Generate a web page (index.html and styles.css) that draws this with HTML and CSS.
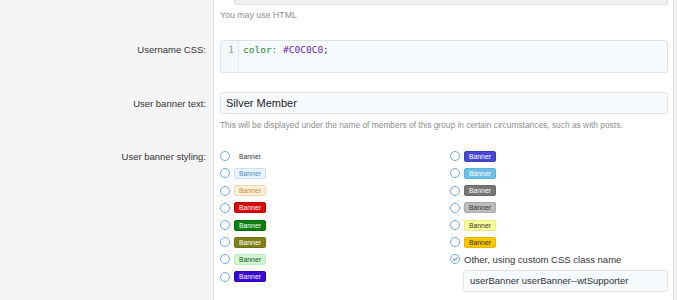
FILE: index.html
```html
<!DOCTYPE html>
<html>
<head>
<meta charset="utf-8">
<link rel="stylesheet" href="styles.css">
</head>
<body>
<div class="form">
  <div class="label"></div>
  <div class="ctrl ctrl--first">
    <div class="stub"></div>
    <div class="hint hint--top">You may use HTML</div>
  </div>

  <div class="label label--css">Username CSS:</div>
  <div class="ctrl ctrl--css">
    <div class="code">
      <div class="gutter">1</div>
      <div class="lines"><span class="prop">color:</span> <span class="val">#C0C0C0</span>;</div>
    </div>
  </div>

  <div class="label label--text">User banner text:</div>
  <div class="ctrl ctrl--text">
    <div class="input input--big">Silver Member</div>
    <div class="hint hint--text">This will be displayed under the name of members of this group in certain circumstances, such as with posts.</div>
  </div>

  <div class="label label--styling">User banner styling:</div>
  <div class="ctrl ctrl--styling">
    <div class="choices">
      <div class="col">
        <div class="opt"><span class="radio"></span><span class="badge b-plain">Banner</span></div>
        <div class="opt"><span class="radio"></span><span class="badge b-primary">Banner</span></div>
        <div class="opt"><span class="radio"></span><span class="badge b-accent">Banner</span></div>
        <div class="opt"><span class="radio"></span><span class="badge b-red">Banner</span></div>
        <div class="opt"><span class="radio"></span><span class="badge b-green">Banner</span></div>
        <div class="opt"><span class="radio"></span><span class="badge b-olive">Banner</span></div>
        <div class="opt"><span class="radio"></span><span class="badge b-lightgreen">Banner</span></div>
        <div class="opt"><span class="radio"></span><span class="badge b-blue">Banner</span></div>
      </div>
      <div class="col">
        <div class="opt"><span class="radio"></span><span class="badge b-royal">Banner</span></div>
        <div class="opt"><span class="radio"></span><span class="badge b-sky">Banner</span></div>
        <div class="opt"><span class="radio"></span><span class="badge b-gray">Banner</span></div>
        <div class="opt"><span class="radio"></span><span class="badge b-silver">Banner</span></div>
        <div class="opt"><span class="radio"></span><span class="badge b-yellow">Banner</span></div>
        <div class="opt"><span class="radio"></span><span class="badge b-orange">Banner</span></div>
        <div class="opt"><span class="radio radio--checked"><svg width="10" height="10" viewBox="0 0 10 10"><path d="M2.9 5.1 L4.4 6.5 L7.2 3.5" fill="none" stroke="#6aa8d8" stroke-width="1.1" stroke-linecap="round" stroke-linejoin="round"/></svg></span><span class="opt-text">Other, using custom CSS class name</span></div>
        <div class="input input--small">userBanner userBanner--wtSupporter</div>
      </div>
    </div>
  </div>
</div>
</body>
</html>
```

FILE: styles.css
```css
html, body {
  margin: 0;
  padding: 0;
}
body {
  background: #f2f2f2;
  font-family: "Liberation Sans", Arial, sans-serif;
  color: #2b2b2b;
  height: 300px;
  overflow: hidden;
}
.form {
  display: grid;
  grid-template-columns: 214px 460px;
}
.label {
  background: #f5f5f5;
  border-right: 1px solid #e3e3e3;
  text-align: right;
  padding-right: 7px;
  font-size: 9.5px;
  line-height: 12px;
  color: #333;
}
.ctrl {
  background: #fff;
  border-right: 1px solid #dedede;
  padding: 0 5px 0 6px;
}
.ctrl--first { padding-bottom: 9px; }
.stub {
  height: 5px;
  margin-left: 14px;
  background: #efefef;
  border: 1px solid #e0e0e0;
  border-top: none;
  border-radius: 0 0 3px 3px;
  box-sizing: border-box;
}
.hint {
  font-size: 8.8px;
  line-height: 12px;
  color: #8e8e8e;
  white-space: nowrap;
}
.hint--top { margin-top: 4px; }
.hint--text { margin-top: 5px; font-size: 8.4px; }

.label--css { padding-top: 14px; }
.ctrl--css { padding-top: 10px; padding-bottom: 9px; }
.code {
  display: flex;
  height: 33px;
  box-sizing: border-box;
  border: 1px solid #dce4ea;
  border-radius: 3px;
  background: #f7fbfe;
  font-family: "DejaVu Sans Mono", "Liberation Mono", monospace;
  font-size: 9.5px;
  line-height: 12px;
}
.gutter {
  width: 18px;
  box-sizing: border-box;
  padding: 3px 4px 0 0;
  text-align: right;
  color: #999;
  background: #f5f8fa;
  border-right: 1px solid #e6eaee;
}
.lines {
  padding: 3px 0 0 4px;
  color: #333;
}
.prop { color: #22882a; }
.val { color: #6a22b0; }

.label--text { padding-top: 16px; }
.ctrl--text { padding-top: 10px; padding-bottom: 9px; }
.input {
  box-sizing: border-box;
  height: 22px;
  border: 1px solid #dde4ea;
  border-radius: 3px;
  background: #f7fbfe;
  display: flex;
  align-items: center;
  white-space: nowrap;
}
.input--big {
  padding-left: 5px;
  font-size: 11px;
  color: #222;
}
.input--small {
  margin: 1.5px 0 0 13px;
  padding-left: 6px;
  font-size: 9.5px;
  color: #333;
}

.label--styling { padding-top: 10.7px; }
.ctrl--styling { padding-top: 7.7px; padding-bottom: 10px; }
.choices {
  display: grid;
  grid-template-columns: 230px 1fr;
}
.col {
  display: flex;
  flex-direction: column;
}
.opt {
  height: 17.2px;
  display: flex;
  align-items: center;
  gap: 4px;
}
.radio {
  width: 10px;
  height: 10px;
  box-sizing: border-box;
  border: 1.3px solid #72acd9;
  border-radius: 50%;
  flex: none;
  position: relative;
}
.radio svg {
  position: absolute;
  left: -1.3px;
  top: -1.3px;
}
.opt-text {
  font-size: 9.5px;
  color: #333;
}
.badge {
  display: inline-block;
  box-sizing: border-box;
  height: 11px;
  width: 32px;
  text-align: center;
  font-size: 6.8px;
  line-height: 9px;
  border: 1px solid transparent;
  border-radius: 2px;
  color: #fff;
}
.b-plain { color: #333; }
.b-primary { background: #e8f3fb; border-color: #c7e0f2; color: #4f8fc3; }
.b-accent { background: #fdf1de; border-color: #f4d6a4; color: #c98838; }
.b-red { background: #d80a0a; border-color: #c00000; }
.b-green { background: #0b7f12; border-color: #066d0b; }
.b-olive { background: #80801a; border-color: #6f6f10; }
.b-lightgreen { background: #cdf8d2; border-color: #bdedc3; color: #2b4a2e; }
.b-blue { background: #3a08cf; border-color: #2c00b8; }
.b-royal { background: #4747d3; border-color: #3a3ac0; }
.b-sky { background: #6cc0e6; border-color: #5ab3dc; }
.b-gray { background: #777; border-color: #6a6a6a; }
.b-silver { background: #bcbcbc; border-color: #aaa; color: #333; }
.b-yellow { background: #ffff99; border-color: #ece77f; color: #333; }
.b-orange { background: #fac800; border-color: #e8b800; color: #333; }
```
